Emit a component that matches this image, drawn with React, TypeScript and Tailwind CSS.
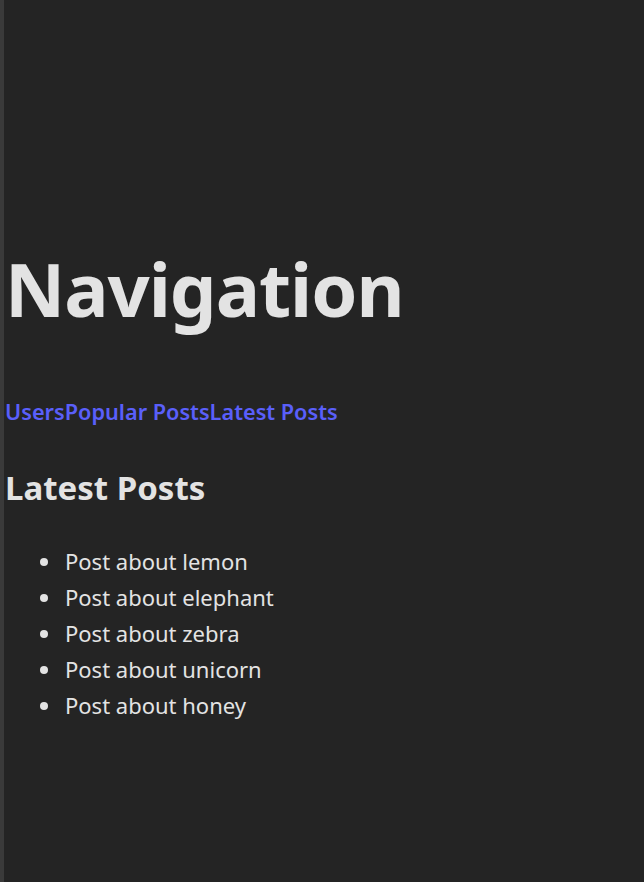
const posts = ["lemon", "elephant", "zebra", "unicorn", "honey"];

export default function App() {
  return (
    <div className="flex min-h-screen w-full bg-[#242424] font-['Noto_Sans',sans-serif] text-[#e3e3e3]">
      <div className="w-[4px] shrink-0 bg-[#3a3a3a]" />
      <main className="pl-[1px] pt-[249px]">
        <h1 className="text-[74px] font-bold leading-[80px] tracking-[-1px]">Navigation</h1>
        <nav className="mt-[69px] flex text-[21.7px] font-semibold leading-[28px] text-[#5a5ffa]">
          <a href="#">Users</a>
          <a href="#">Popular Posts</a>
          <a href="#">Latest Posts</a>
        </nav>
        <h2 className="mt-[42px] text-[33px] font-bold leading-[40px]">Latest Posts</h2>
        <ul className="mt-[35px] list-disc pl-[58px] text-[22px] leading-[36px] marker:text-[#e3e3e3]">
          {posts.map((p) => (
            <li key={p} className="pl-[2px]">Post about {p}</li>
          ))}
        </ul>
      </main>
    </div>
  );
}
